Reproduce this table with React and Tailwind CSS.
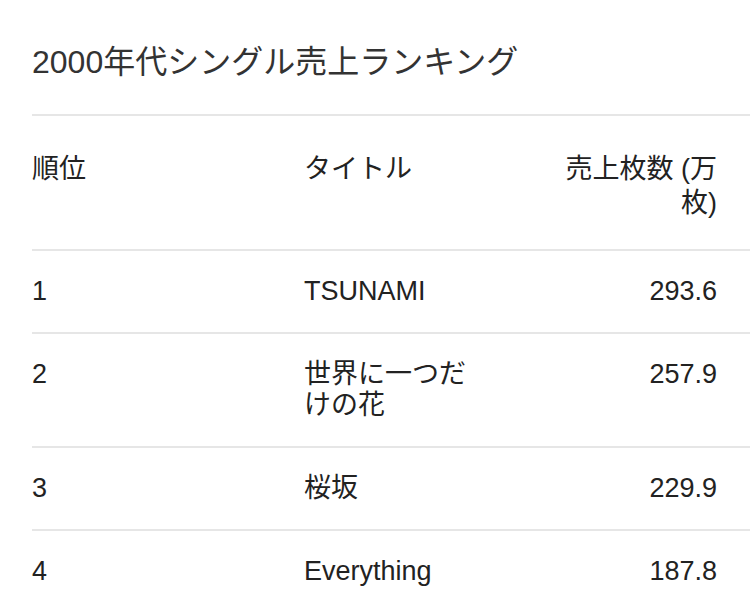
import React from 'react';

const rows = [
  { rank: 1, title: 'TSUNAMI', sales: '293.6' },
  { rank: 2, title: '世界に一つだけの花', sales: '257.9' },
  { rank: 3, title: '桜坂', sales: '229.9' },
  { rank: 4, title: 'Everything', sales: '187.8' },
];

export default function App() {
  return (
    <div
      className="min-h-screen bg-white pl-8 text-[#222]"
      style={{ fontFamily: '"Liberation Sans", "Noto Sans CJK JP", sans-serif' }}
    >
      {/* Title */}
      <h2 className="pt-[42px] pb-[32px] text-[32px] leading-[40px] text-[#333] border-b-2 border-[#e6e6e6]">
        2000年代シングル売上ランキング
      </h2>

      {/* Ranking table */}
      <table className="w-full table-fixed border-collapse">
        <colgroup>
          <col className="w-[272px]" />
          <col className="w-[253px]" />
          <col className="w-[193px]" />
        </colgroup>
        <thead>
          <tr className="border-b-2 border-[#e6e6e6]">
            <th className="pt-[36px] pb-[29px] text-left align-top font-normal text-[27px] leading-[34px]">順位</th>
            <th className="pt-[36px] pb-[29px] pr-[78px] text-left align-top font-normal text-[27px] leading-[34px]">タイトル</th>
            <th className="pt-[36px] pb-[29px] pr-[33px] text-right align-top font-normal text-[27px] leading-[34px]">売上枚数 (万枚)</th>
          </tr>
        </thead>
        <tbody>
          {rows.map((row) => (
            <tr key={row.rank} className="border-b-2 border-[#e6e6e6]">
              <td className="py-[25px] align-top text-[27px] leading-[31px]">{row.rank}</td>
              <td className="py-[25px] pr-[78px] align-top text-[27px] leading-[31px]">{row.title}</td>
              <td className="py-[25px] pr-[33px] text-right align-top text-[27px] leading-[31px]">{row.sales}</td>
            </tr>
          ))}
        </tbody>
      </table>
    </div>
  );
}
